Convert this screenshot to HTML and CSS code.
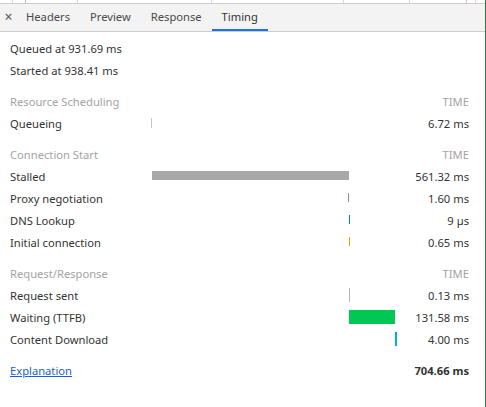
FILE: index.html
```html
<!DOCTYPE html>
<html>
<head>
<meta charset="utf-8">
<link rel="stylesheet" href="styles.css">
</head>
<body>
<div class="panel">
  <div class="strip">
    <span class="cell" style="width:13px"></span>
    <span class="cell blue" style="width:13px"></span>
    <span class="cell" style="width:52px"></span>
    <span class="cell" style="width:134px"></span>
    <span class="cell" style="width:132px"></span>
    <span class="cell" style="width:66px"></span>
    <span class="cell pink" style="width:57px"></span>
    <span class="cell" style="width:9px"></span>
  </div>
  <div class="tabbar">
    <span class="close">×</span>
    <span class="tab">Headers</span>
    <span class="tab">Preview</span>
    <span class="tab">Response</span>
    <span class="tab active">Timing</span>
  </div>
  <div class="content">
    <div class="row"><span class="label wide">Queued at 931.69 ms</span></div>
    <div class="row"><span class="label wide">Started at 938.41 ms</span></div>

    <div class="row section"><span class="label">Resource Scheduling</span><span class="track"></span><span class="value">TIME</span></div>
    <div class="row"><span class="label">Queueing</span><span class="track"><span class="bar small queue" style="margin-left:1px;width:1px"></span></span><span class="value">6.72 ms</span></div>

    <div class="row section"><span class="label">Connection Start</span><span class="track"></span><span class="value">TIME</span></div>
    <div class="row"><span class="label">Stalled</span><span class="track"><span class="bar small stalled" style="margin-left:2px;width:197px"></span></span><span class="value">561.32 ms</span></div>
    <div class="row"><span class="label">Proxy negotiation</span><span class="track"><span class="bar small proxy" style="margin-left:198px;width:1px"></span></span><span class="value">1.60 ms</span></div>
    <div class="row"><span class="label">DNS Lookup</span><span class="track"><span class="bar small dns" style="margin-left:199px;width:1px"></span></span><span class="value">9 µs</span></div>
    <div class="row"><span class="label">Initial connection</span><span class="track"><span class="bar small connect" style="margin-left:199px;width:1px"></span></span><span class="value">0.65 ms</span></div>

    <div class="row section"><span class="label">Request/Response</span><span class="track"></span><span class="value">TIME</span></div>
    <div class="row"><span class="label">Request sent</span><span class="track"><span class="bar big sent" style="margin-left:199px;width:1px"></span></span><span class="value">0.13 ms</span></div>
    <div class="row"><span class="label">Waiting (TTFB)</span><span class="track"><span class="bar big waiting" style="margin-left:199px;width:46px"></span></span><span class="value">131.58 ms</span></div>
    <div class="row"><span class="label">Content Download</span><span class="track"><span class="bar big download" style="margin-left:245px;width:2px"></span></span><span class="value">4.00 ms</span></div>

    <div class="row section footer"><a class="link" href="#">Explanation</a><span class="total">704.66 ms</span></div>
  </div>
</div>
</body>
</html>
```
FILE: styles.css
```css
html, body {
  margin: 0;
  padding: 0;
  background: #fff;
}
body {
  font-family: "Noto Sans", "Open Sans", sans-serif;
  font-size: 11.2px;
  color: #333;
}
.panel {
  width: 485px;
  height: 407px;
  border-right: 1px solid #2f7d32;
  overflow: hidden;
}
.strip {
  display: flex;
  height: 3px;
  border-bottom: 1px solid #cbcdd1;
}
.cell {
  box-sizing: border-box;
  border-right: 1px solid #dadada;
  flex: none;
}
.cell.blue { border-right-color: #a9c0e0; }
.cell.pink { border-right-color: #f2b8b8; }
.tabbar {
  display: flex;
  align-items: stretch;
  height: 27px;
  background: #f3f3f3;
  border-bottom: 1px solid #cbcdd1;
}
.close {
  width: 15px;
  padding-left: 1px;
  text-align: center;
  line-height: 26px;
  color: #555;
  font-size: 14px;
}
.tab {
  padding: 0 10px;
  line-height: 25px;
  color: #4a4a4a;
  border-bottom: 2px solid transparent;
}
.tab.active {
  color: #333;
  border-bottom-color: #1a73e8;
}
.content {
  padding: 5px 16px 0 10px;
}
.row {
  display: flex;
  align-items: center;
  height: 22px;
}
.row.section {
  margin-top: 9px;
  color: #a3a3a3;
}
.label {
  width: 140px;
  flex: none;
  white-space: nowrap;
}
.label.wide { width: auto; }
.track {
  width: 247px;
  flex: none;
  display: flex;
  align-items: center;
  height: 22px;
}
.bar {
  display: block;
  flex: none;
}
.bar.small { height: 9px; margin-top: -2px; }
.bar.small.queue { height: 10px; margin-top: -1px; }
.bar.big { height: 14px; margin-top: -1px; }
.queue { background: #c4c4c4; }
.stalled { background: #a8a8a8; }
.proxy { background: #a1887f; }
.dns { background: #009688; }
.connect { background: #ff9800; }
.sent { background: #b3b3b3; }
.waiting { background: #00c853; }
.download { background: #03a9f4; }
.value {
  flex: 1;
  text-align: right;
  white-space: nowrap;
}
.footer {
  justify-content: space-between;
  color: #333;
}
.link {
  color: #1a5fd0;
  text-decoration: underline;
}
.total {
  font-weight: bold;
  color: #333;
}
```
